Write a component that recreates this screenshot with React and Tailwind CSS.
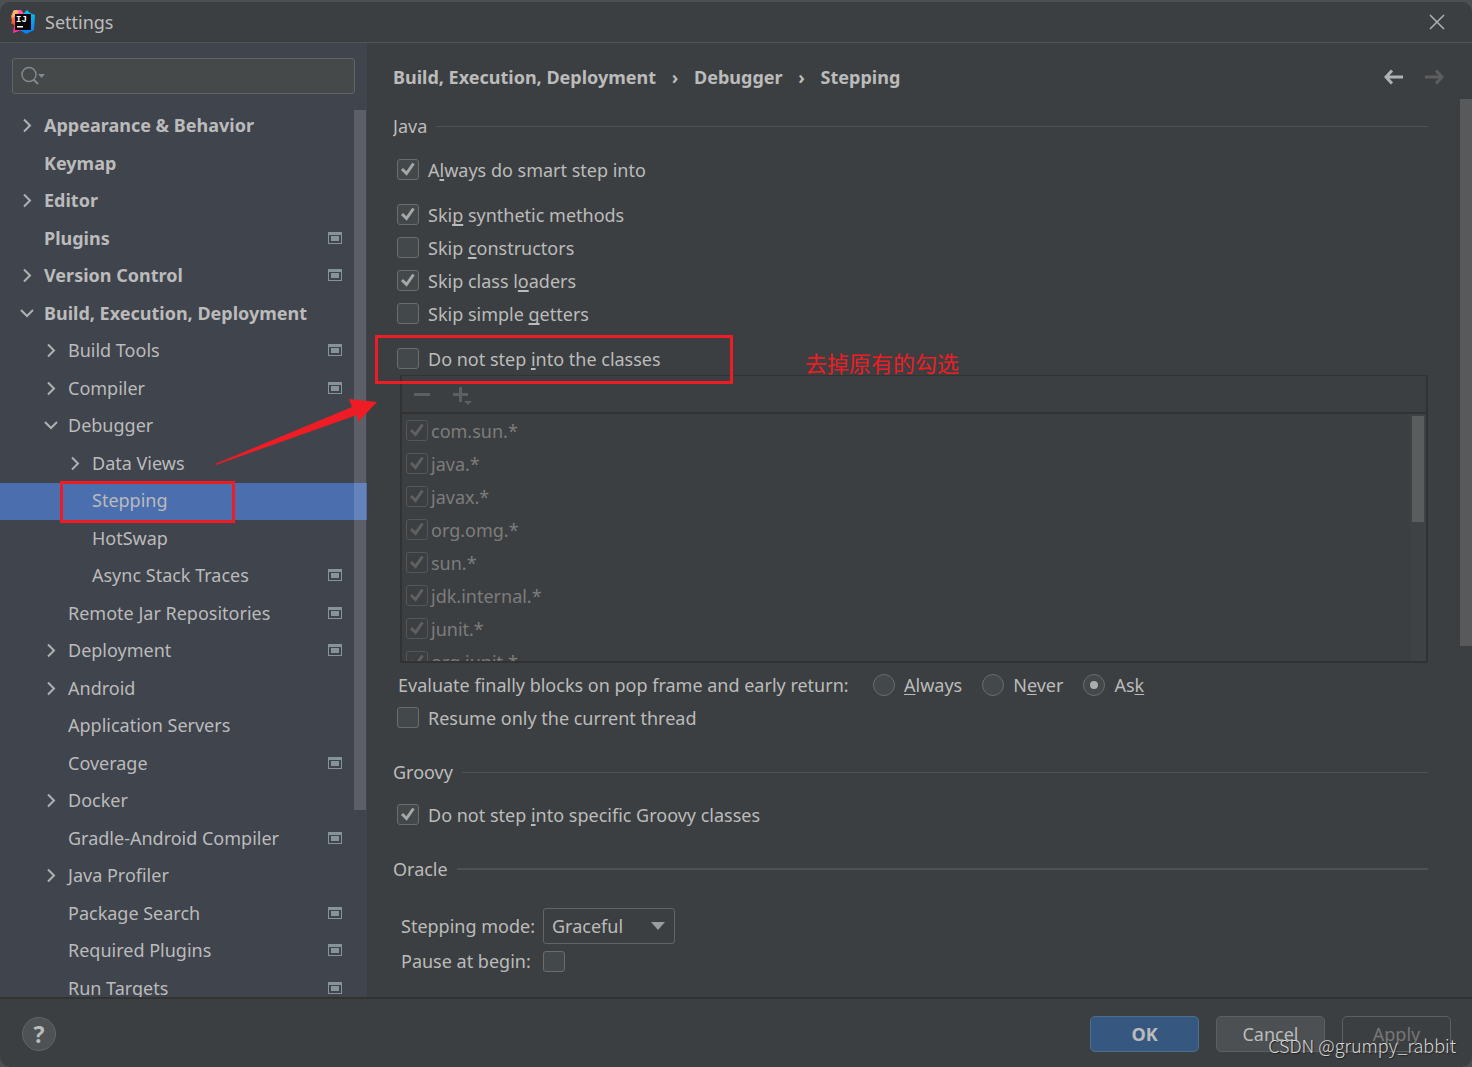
import React from 'react';

const TREE = [
  { label: 'Appearance & Behavior', level: 0, arrow: 'right' },
  { label: 'Keymap', level: 0 },
  { label: 'Editor', level: 0, arrow: 'right' },
  { label: 'Plugins', level: 0, badge: true },
  { label: 'Version Control', level: 0, arrow: 'right', badge: true },
  { label: 'Build, Execution, Deployment', level: 0, arrow: 'down' },
  { label: 'Build Tools', level: 1, arrow: 'right', badge: true },
  { label: 'Compiler', level: 1, arrow: 'right', badge: true },
  { label: 'Debugger', level: 1, arrow: 'down' },
  { label: 'Data Views', level: 2, arrow: 'right' },
  { label: 'Stepping', level: 2, selected: true },
  { label: 'HotSwap', level: 2 },
  { label: 'Async Stack Traces', level: 2, badge: true },
  { label: 'Remote Jar Repositories', level: 1, badge: true },
  { label: 'Deployment', level: 1, arrow: 'right', badge: true },
  { label: 'Android', level: 1, arrow: 'right' },
  { label: 'Application Servers', level: 1 },
  { label: 'Coverage', level: 1, badge: true },
  { label: 'Docker', level: 1, arrow: 'right' },
  { label: 'Gradle-Android Compiler', level: 1, badge: true },
  { label: 'Java Profiler', level: 1, arrow: 'right' },
  { label: 'Package Search', level: 1, badge: true },
  { label: 'Required Plugins', level: 1, badge: true },
  { label: 'Run Targets', level: 1, badge: true },
];

const INDENT = ['pl-5', 'pl-11', 'pl-[68px]'];

const CLASSES = [
  'com.sun.*',
  'java.*',
  'javax.*',
  'org.omg.*',
  'sun.*',
  'jdk.internal.*',
  'junit.*',
  'org.junit.*',
];

function Logo() {
  return (
    <svg className="size-6 shrink-0" viewBox="0 0 24 24" aria-hidden="true">
      <defs>
        <linearGradient id="ij-left" x1="0" y1="0" x2="0" y2="1">
          <stop offset="0" stopColor="#fdb060" />
          <stop offset="0.45" stopColor="#fc6a2e" />
          <stop offset="0.7" stopColor="#fe2857" />
          <stop offset="1" stopColor="#f434b8" />
        </linearGradient>
        <linearGradient id="ij-right" x1="0" y1="0" x2="0" y2="1">
          <stop offset="0" stopColor="#07c3f2" />
          <stop offset="1" stopColor="#087cfa" />
        </linearGradient>
      </defs>
      <path d="M3 0h6l4 6-2 14-9 3 1-8-3-2 1-2-1-5z" fill="url(#ij-left)" />
      <path d="M7 0h3l4 5-7 2-3 5-2-6z" fill="#fc56a0" />
      <path d="M2 1h6l-3 5-4 2z" fill="#fcb36a" />
      <path d="M13 3l3-3 3 3 5 2-1 15-8 4-6-4 4-8z" fill="url(#ij-right)" />
      <rect x="4" y="4" width="16" height="16" fill="#0a0508" />
      <text x="5" y="12" fill="#fff" fontFamily="Liberation Mono, monospace" fontWeight="700" fontSize="9">IJ</text>
      <rect x="6" y="16" width="6" height="1.500" fill="#fff" />
    </svg>
  );
}

function Chevron({ dir }) {
  if (!dir) return <span className="w-6 shrink-0" />;
  return (
    <span className="flex w-6 shrink-0">
      <svg className="size-4" viewBox="0 0 16 16" fill="none" stroke="#afb1b3" strokeWidth="2" aria-hidden="true">
        <path d={dir === 'right' ? 'M4 2.500L10 8.500L4 14.500' : 'M1 5L7 11L13 5'} />
      </svg>
    </span>
  );
}

function ProjectBadge() {
  return (
    <svg className="h-3 w-3.5 shrink-0" viewBox="0 0 14 12" aria-hidden="true">
      <path fillRule="evenodd" d="M0 0H14V12H0ZM1 3V11H13V3Z" fill="#87939a" />
      <rect x="3" y="4" width="8" height="5" fill="#87939a" />
    </svg>
  );
}

function Check({ label, checked, disabled, id }) {
  return (
    <span className="grid h-[21px] w-[22px] shrink-0">
      <input
        id={id}
        type="checkbox"
        aria-label={label}
        defaultChecked={checked}
        disabled={disabled}
        className="peer col-start-1 row-start-1 h-full w-full appearance-none rounded-[3px] border border-[#6b6b6b] bg-[#43494a] disabled:border-[#545657] disabled:bg-transparent"
      />
      <svg
        className="pointer-events-none invisible col-start-1 row-start-1 h-full w-full text-[#a7a7a7] peer-checked:visible peer-disabled:text-[#606060]"
        viewBox="0 0 22 21"
        fill="none"
        stroke="currentColor"
        strokeWidth="3"
        aria-hidden="true"
      >
        <path d="M5 10L9.500 14.500L16.500 4.500" />
      </svg>
    </span>
  );
}

function M({ children }) {
  return <span className="underline decoration-2 underline-offset-2 [text-decoration-skip-ink:none]">{children}</span>;
}

function Option({ checked, children }) {
  return (
    <label className="flex h-[33px] items-center gap-[9px] pl-1">
      <Check checked={checked} />
      <span>{children}</span>
    </label>
  );
}

function Radio({ checked, children }) {
  return (
    <label className="flex items-center gap-[9px]">
      <span className="grid size-[22px] place-items-center">
        <input
          type="radio"
          name="evaluate-finally"
          defaultChecked={checked}
          className="peer col-start-1 row-start-1 size-[22px] appearance-none rounded-full border border-[#6b6b6b] bg-[#43494a]"
        />
        <span className="pointer-events-none invisible col-start-1 row-start-1 size-2 rounded-full bg-[#adadad] peer-checked:visible" />
      </span>
      <span className="[&_u]:underline-offset-2 [&_u]:[text-decoration-skip-ink:none]">{children}</span>
    </label>
  );
}

function SectionTitle({ children, thick }) {
  return (
    <h2 className="flex h-[30px] items-center gap-[9px]">
      <span>{children}</span>
      <span className={thick ? 'h-0.5 flex-1 bg-[#515151]' : 'h-px flex-1 bg-[#515151]'} />
    </h2>
  );
}

function Sidebar() {
  return (
    <aside className="flex w-[367px] shrink-0 flex-col bg-[#40444d]">
      <div className="mx-3 mt-[15px] mb-3.5 flex h-9 shrink-0 items-center rounded-[3px] border border-[#646464] bg-[#45494a] px-2">
        <svg className="h-5 w-6 shrink-0" viewBox="0 0 24 20" fill="none" aria-hidden="true">
          <circle cx="8" cy="8.500" r="7" stroke="#7f8b91" strokeWidth="1.500" />
          <path d="M12.500 13.500L17 18" stroke="#7f8b91" strokeWidth="2" />
          <path d="M17 8h7l-3.500 4z" fill="#7f8b91" />
        </svg>
        <input type="text" aria-label="Search settings" className="min-w-0 flex-1 bg-transparent outline-none" />
      </div>
      <nav aria-label="Settings" className="relative min-h-0 flex-1 overflow-hidden">
        <ul>
          {TREE.map((n) => (
            <li key={n.label} className="odd:h-[37px] even:h-[38px]">
              <a
                href="#"
                className={
                  'flex h-full items-center pr-[25px] pb-[3px] ' +
                  INDENT[n.level] +
                  (n.level === 0 ? ' font-bold' : '') +
                  (n.selected ? ' bg-[#4b6eaf]' : '')
                }
              >
                <Chevron dir={n.arrow} />
                <span className="flex-1 whitespace-nowrap">{n.label}</span>
                {n.badge && <ProjectBadge />}
              </a>
            </li>
          ))}
        </ul>
        <div className="absolute top-0.5 right-px h-[700px] w-3 bg-white/15" />
      </nav>
    </aside>
  );
}

function ClassList() {
  return (
    <div className="ml-[7px] border-2 border-t border-[#323232] text-[#7c7c7c]">
      <div className="flex h-9 items-center gap-4 px-[11px]">
        <button type="button" disabled aria-label="Remove" className="size-[22px]">
          <svg viewBox="0 0 22 22" aria-hidden="true">
            <path d="M1 10h16v3H1z" fill="#5d5f60" />
          </svg>
        </button>
        <button type="button" disabled aria-label="Add" className="size-[22px]">
          <svg viewBox="0 0 22 22" fill="#5d5f60" aria-hidden="true">
            <path d="M8 4h3v6h6v3h-6v6H8v-6H2v-3h6z" />
            <path d="M13 18h8l-4 4z" />
          </svg>
        </button>
      </div>
      <div className="flex h-[249px] border-t-2 border-[#323232]">
        <ul className="flex-1 overflow-hidden pl-1">
          {CLASSES.map((c) => (
            <li key={c}>
              <label className="flex h-[33px] items-center gap-[3px]">
                <Check checked disabled />
                <span>{c}</span>
              </label>
            </li>
          ))}
        </ul>
        <div className="w-4 bg-[#3f4244] pt-0.5 pl-0.5">
          <div className="h-[106px] w-3 bg-[#5a5d5e]" />
        </div>
      </div>
    </div>
  );
}

function Content() {
  return (
    <main className="flex min-w-0 flex-1 flex-col pl-[26px]">
      <div className="flex h-14 shrink-0 items-center justify-between pt-3 pr-7">
        <nav aria-label="Breadcrumb" className="flex items-center font-bold">
          <a href="#">Build, Execution, Deployment</a>
          <span className="w-[38px] text-center">›</span>
          <a href="#">Debugger</a>
          <span className="w-[38px] text-center">›</span>
          <span>Stepping</span>
        </nav>
        <div className="flex gap-5">
          <button type="button" aria-label="Back" className="h-4 w-5">
            <svg viewBox="0 0 20 16" fill="none" stroke="#afb1b3" strokeWidth="3" aria-hidden="true">
              <path d="M19 8H2M8 1.500L2 8L8 14.500" />
            </svg>
          </button>
          <button type="button" aria-label="Forward" disabled className="h-4 w-5">
            <svg viewBox="0 0 20 16" fill="none" stroke="#5c5e60" strokeWidth="3" aria-hidden="true">
              <path d="M1 8H18M12 1.500L18 8L12 14.500" />
            </svg>
          </button>
        </div>
      </div>
      <div className="flex min-h-0 flex-1">
        <div className="min-w-0 flex-1 overflow-hidden pt-3 pr-8">
          <section>
            <SectionTitle>Java</SectionTitle>
            <div className="mt-3">
              <Option checked>A<M>l</M>ways do smart step into</Option>
            </div>
            <div className="mt-3">
              <Option checked>Ski<M>p</M> synthetic methods</Option>
              <Option>Skip <M>c</M>onstructors</Option>
              <Option checked>Skip class l<M>o</M>aders</Option>
              <Option>Skip simple <M>g</M>etters</Option>
            </div>
            <div className="mt-3">
              <Option>Do not step <M>i</M>nto the classes</Option>
              <ClassList />
            </div>
            <div
              role="radiogroup"
              aria-labelledby="evaluate-label"
              className="mt-[5px] flex h-[33px] items-center gap-5 pl-[5px]"
            >
              <span id="evaluate-label" className="w-[455px] whitespace-nowrap">
                Evaluate finally blocks on pop frame and early return:
              </span>
              <Radio><u>A</u>lways</Radio>
              <Radio>N<u>e</u>ver</Radio>
              <Radio checked>As<u>k</u></Radio>
            </div>
            <Option>Resume only the current thread</Option>
          </section>
          <section className="mt-[23px]">
            <SectionTitle>Groovy</SectionTitle>
            <div className="mt-[11px]">
              <Option checked>Do not step <M>i</M>nto specific Groovy classes</Option>
            </div>
          </section>
          <section className="mt-[23px]">
            <SectionTitle thick>Oracle</SectionTitle>
            <div className="mt-6 grid grid-cols-[142px_132px] items-center pl-2">
              <label htmlFor="stepping-mode" className="whitespace-nowrap">Stepping mode:</label>
              <span className="grid h-9 items-center">
                <select
                  id="stepping-mode"
                  className="col-start-1 row-start-1 h-full w-full appearance-none rounded-[3px] border border-[#646464] bg-transparent pl-2"
                >
                  <option>Graceful</option>
                </select>
                <svg className="pointer-events-none col-start-1 row-start-1 mr-2.5 h-2 w-3.5 justify-self-end" viewBox="0 0 14 8" aria-hidden="true">
                  <path d="M0 0h14L7 8z" fill="#9a9da0" />
                </svg>
              </span>
              <label htmlFor="pause-at-begin" className="flex h-[34px] items-center">Pause at begin:</label>
              <Check id="pause-at-begin" />
            </div>
          </section>
        </div>
        <div className="h-[547px] w-3 shrink-0 bg-[#58595b]" />
      </div>
    </main>
  );
}

function Annotations() {
  return (
    <div className="pointer-events-none text-[#ee1c24]">
      <div className="absolute top-[335px] left-[375px] h-[49px] w-[358px] border-3 border-current" />
      <div className="absolute top-[481px] left-[60px] h-[42px] w-[175px] border-3 border-current" />
      <svg className="absolute top-[399px] left-[214px] h-[68px] w-[164px]" viewBox="0 0 164 68" fill="currentColor" aria-hidden="true">
        <path d="M1 65L138 8L135 0L163 3L144 23L143 16L2 66Z" />
      </svg>
      <p className="absolute top-[346px] left-[805px] font-['Noto_Sans_CJK_SC',sans-serif] text-[22px] leading-8 whitespace-nowrap">
        去掉原有的勾选
      </p>
      <p className="absolute right-4 bottom-2.5 font-['Noto_Sans_CJK_SC',sans-serif] text-lg leading-6 font-light whitespace-nowrap text-[#d8d8d8] [text-shadow:1px_1px_1px_#222]">
        CSDN @grumpy_rabbit
      </p>
    </div>
  );
}

export default function App() {
  return (
    <div className="relative h-screen overflow-hidden bg-[#4d4f50] pt-0.5 font-['Noto_Sans',sans-serif] text-lg leading-6 text-[#bbbbbb]">
      <div className="flex h-full flex-col overflow-hidden rounded-[10px] bg-[#3c3f41]">
        <header className="flex h-[41px] shrink-0 items-center gap-2.5 border-b border-[#515456] pr-[26px] pb-px pl-[11px]">
          <Logo />
          <h1 className="flex-1">Settings</h1>
          <button type="button" aria-label="Close" className="size-[18px]">
            <svg viewBox="0 0 18 18" stroke="#afb1b3" strokeWidth="1.500" aria-hidden="true">
              <path d="M2 2L16 16M16 2L2 16" />
            </svg>
          </button>
        </header>
        <div className="flex min-h-0 flex-1">
          <Sidebar />
          <Content />
        </div>
        <footer className="flex h-[70px] shrink-0 items-center gap-[17px] border-t-2 border-[#323232] pt-0.5 pr-[21px] pl-[22px]">
          <button
            type="button"
            aria-label="Help"
            className="mr-auto size-[34px] rounded-full border border-[#626567] bg-[#4e5254] text-[23px] font-bold"
          >
            ?
          </button>
          <button type="button" className="h-9 w-[109px] rounded-[5px] border border-[#4c708c] bg-[#365880] font-bold">
            OK
          </button>
          <button type="button" className="h-9 w-[109px] rounded-[5px] border border-[#5e6060] bg-[#4c5052]">
            Cancel
          </button>
          <button type="button" disabled className="h-9 w-[109px] rounded-[5px] border border-[#5e6060] text-[#777777]">
            Apply
          </button>
        </footer>
      </div>
      <Annotations />
    </div>
  );
}
